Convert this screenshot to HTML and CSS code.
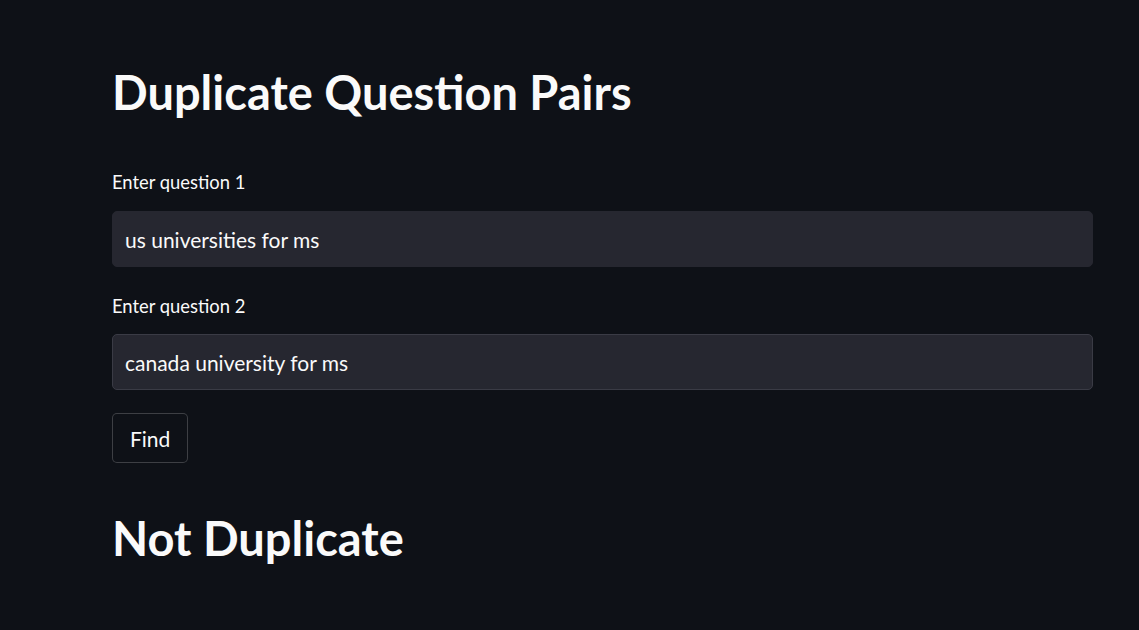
FILE: index.html
```html
<!DOCTYPE html>
<html>
<head>
<meta charset="utf-8">
<link rel="stylesheet" href="styles.css">
</head>
<body>
<main class="app">
  <h1 class="title">Duplicate Question Pairs</h1>
  <div class="field">
    <label class="label">Enter question 1</label>
    <div class="input">us universities for ms</div>
  </div>
  <div class="field">
    <label class="label">Enter question 2</label>
    <div class="input input-focus">canada university for ms</div>
  </div>
  <div class="actions">
    <button class="btn">Find</button>
  </div>
  <h1 class="result">Not Duplicate</h1>
</main>
</body>
</html>
```
FILE: styles.css
```css
html, body {
  margin: 0;
  padding: 0;
  background: #0e1117;
  height: 100%;
}
body {
  font-family: "Lato", "Noto Sans", sans-serif;
  color: #fafafa;
  overflow: hidden;
}
.app {
  display: flex;
  flex-direction: column;
  padding: 62px 0 0 112px;
  width: 981px;
}
.title, .result {
  margin: 0;
  font-size: 47px;
  font-weight: 700;
  line-height: 60px;
}
.field {
  display: flex;
  flex-direction: column;
}
.title { margin-bottom: 50px; }
.label {
  font-size: 18.4px;
  line-height: 20px;
  margin-bottom: 19px;
}
.input {
  box-sizing: border-box;
  height: 56px;
  background: #262730;
  border: 1px solid #262730;
  border-radius: 5px;
  padding: 0 12px;
  display: flex;
  align-items: center;
  font-size: 21px;
  margin-bottom: 29px;
}
.field + .field .label { margin-bottom: 18px; }
.input-focus {
  border-color: #3a3b45;
  margin-bottom: 23px;
}
.actions { display: flex; }
.btn {
  font-family: inherit;
  color: #fafafa;
  background: #0e1117;
  border: 1px solid rgba(250,250,250,0.2);
  border-radius: 5px;
  height: 50px;
  padding: 0 17px;
  font-size: 21px;
}
.result { margin-top: 45px; }
```
